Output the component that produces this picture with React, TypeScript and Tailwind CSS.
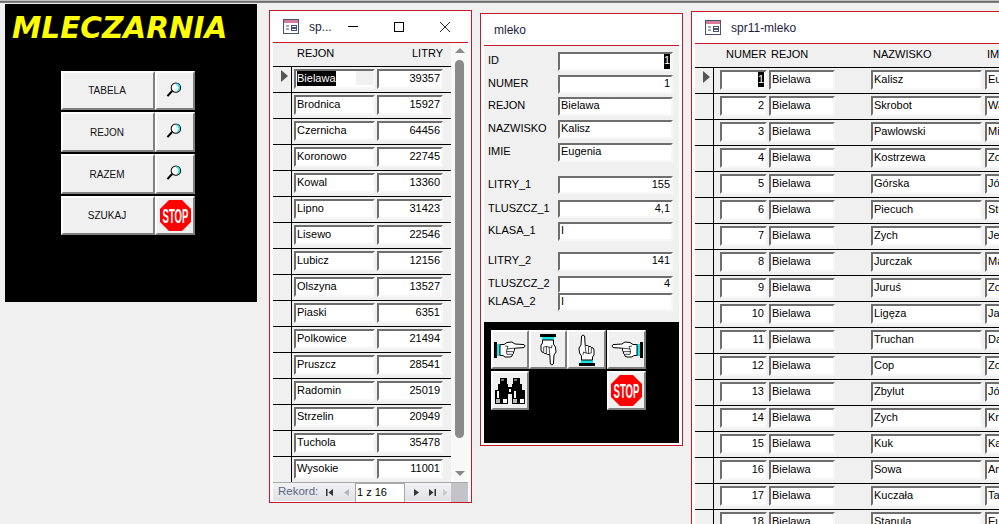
const FONT = "font-['Liberation_Sans',Arial,sans-serif]";

const REJONY: [string, number][] = [
  ["Bielawa", 39357],
  ["Brodnica", 15927],
  ["Czernicha", 64456],
  ["Koronowo", 22745],
  ["Kowal", 13360],
  ["Lipno", 31423],
  ["Lisewo", 22546],
  ["Lubicz", 12156],
  ["Olszyna", 13527],
  ["Piaski", 6351],
  ["Polkowice", 21494],
  ["Pruszcz", 28541],
  ["Radomin", 25019],
  ["Strzelin", 20949],
  ["Tuchola", 35478],
  ["Wysokie", 11001],
];

const OSOBY: [string, string][] = [
  ["Kalisz", "Eugenia"],
  ["Skrobot", "Wanda"],
  ["Pawlowski", "Mieczysław"],
  ["Kostrzewa", "Zofia"],
  ["Górska", "Józefa"],
  ["Piecuch", "Stefan"],
  ["Zych", "Jerzy"],
  ["Jurczak", "Maria"],
  ["Juruś", "Zofia"],
  ["Ligęza", "Janina"],
  ["Truchan", "Danuta"],
  ["Cop", "Zofia"],
  ["Zbylut", "Józef"],
  ["Zych", "Krystyna"],
  ["Kuk", "Karol"],
  ["Sowa", "Anna"],
  ["Kuczała", "Tadeusz"],
  ["Stanula", "Eugenia"],
];

const FORM_ROWS = [
  { label: "ID", value: "1", right: true, selected: true, cls: "h-[19px]" },
  { label: "NUMER", value: "1", right: true, cls: "mt-[4px] h-[19px]" },
  { label: "REJON", value: "Bielawa", cls: "mt-[3px] h-[19px]" },
  { label: "NAZWISKO", value: "Kalisz", cls: "mt-[4px] h-[19px]" },
  { label: "IMIE", value: "Eugenia", cls: "mt-[4px] h-[19px]" },
  { label: "LITRY_1", value: "155", right: true, cls: "mt-[14px] h-[18px]" },
  { label: "TLUSZCZ_1", value: "4,1", right: true, cls: "mt-[6px] h-[18px]" },
  { label: "KLASA_1", value: "I", cls: "mt-[4px] h-[19px]" },
  { label: "LITRY_2", value: "141", right: true, cls: "mt-[11px] h-[19px]" },
  { label: "TLUSZCZ_2", value: "4", right: true, cls: "mt-[5px] h-[17px]" },
  { label: "KLASA_2", value: "I", cls: "h-[18px]" },
];

const Field = ({
  value,
  right,
  selected,
  className,
}: {
  value: string | number;
  right?: boolean;
  selected?: boolean;
  className: string;
}) => (
  <div
    className={`flex shrink-0 items-center overflow-hidden whitespace-nowrap border-2 border-t-[#6e6e6e] border-l-[#6e6e6e] border-r-[#f7f7f7] border-b-[#f7f7f7] bg-white pb-[2px] text-[11px] text-black ${
      right ? "justify-end pr-[1px]" : "pl-[1px]"
    } ${className}`}
  >
    <span className={selected ? "bg-black text-white" : ""}>{value}</span>
    {selected && !right && <div className="ml-auto h-full w-[17px] bg-[#f0f0f0]" />}
  </div>
);

const FormIcon = () => (
  <svg width="16" height="15" viewBox="0 0 16 15" className="shrink-0">
    <rect x="0.5" y="0.5" width="15" height="14" fill="#fff" stroke="#44546f" />
    <rect x="1" y="1" width="14" height="3" fill="#d9799c" />
    <path d="M3 7h3M3 10h3" stroke="#44546f" />
    <rect x="8.5" y="6.5" width="5" height="2" fill="#fff" stroke="#44546f" />
    <rect x="8.5" y="9.5" width="5" height="2" fill="#fff" stroke="#44546f" />
  </svg>
);

const Magnifier = () => (
  <svg width="16" height="16" viewBox="0 0 17 17" className="mr-[3px] mb-[2px]">
    <circle cx="10.5" cy="6" r="5" fill="#fff" stroke="#000" strokeWidth="1.1" />
    <path d="M11 2.2A4 4 0 0 1 14.3 6A4 4 0 0 1 12 9.5" fill="none" stroke="#19e3e3" strokeWidth="1.6" />
    <path d="M6.5 9.5L1.5 15" stroke="#000" strokeWidth="2.2" />
  </svg>
);

const Stop = () => (
  <svg width="31" height="31" viewBox="0 0 31 31">
    <polygon points="9,0 22,0 31,9 31,22 22,31 9,31 0,22 0,9" fill="#ff0000" />
    <text
      transform="translate(15.5 22.5) scale(0.87 1.8)"
      textAnchor="middle"
      fill="#fff"
      fontSize="11"
      fontWeight="700"
      fontFamily="'Liberation Sans', Arial, sans-serif"
    >
      STOP
    </text>
  </svg>
);

// drawn pointing right, the other three are rotated
const Hand = ({ className = "" }: { className?: string }) => (
  <svg width="32" height="18" viewBox="0 0 32 18" className={`shrink-0 ${className}`}>
    <rect x="0" y="1" width="3" height="16" fill="#000" />
    <rect x="3" y="3" width="3" height="12" fill="#19e3e3" />
    <path
      d="M6 3.5L10 3.5L13 1.5L18 1L21 3L30 3.6Q32 5 30 6.6L20.5 7.2L20.5 9.5Q20.5 10.5 19.5 10.7Q20 13 18.6 13.3Q18.6 15.8 16 16L11 16L9 14.5L6 14.5Z"
      fill="#fff"
      stroke="#000"
      strokeWidth="1"
    />
    <path d="M11 5L14 5.5L13 8L20 7.2M13 8L12.5 10.5L19.5 10.7M12.5 10.5L13 13.3L18.6 13.3" fill="none" stroke="#000" strokeWidth="0.7" />
  </svg>
);

const Binoculars = () => (
  <svg width="30" height="26" viewBox="0 0 30 26" shapeRendering="crispEdges">
    <rect x="5" y="0" width="7" height="6" fill="#000" />
    <rect x="18" y="0" width="7" height="6" fill="#000" />
    <rect x="6" y="1" width="3" height="2" fill="#777" />
    <rect x="19" y="1" width="3" height="2" fill="#777" />
    <rect x="3" y="6" width="10" height="6" fill="#000" />
    <rect x="17" y="6" width="10" height="6" fill="#000" />
    <rect x="0" y="12" width="13" height="14" fill="#000" />
    <rect x="17" y="12" width="13" height="14" fill="#000" />
    <rect x="13" y="9" width="4" height="7" fill="#000" />
    <rect x="14" y="11" width="2" height="3" fill="#fff" />
    <rect x="2" y="13" width="2" height="7" fill="#fff" />
    <rect x="19" y="13" width="2" height="7" fill="#fff" />
    <rect x="1" y="21" width="4" height="4" fill="#bbb" />
    <rect x="18" y="21" width="4" height="4" fill="#bbb" />
    <rect x="8" y="21" width="4" height="4" fill="#fff" />
    <rect x="25" y="21" width="4" height="4" fill="#fff" />
  </svg>
);

const BEVEL =
  "flex shrink-0 items-center justify-center border-2 border-t-white border-l-white border-r-[#808080] border-b-[#808080] bg-[#f0f0f0]";

const MENU = [
  { label: "TABELA", cls: "h-[39px]", icon: <Magnifier /> },
  { label: "REJON", cls: "h-[40px]", icon: <Magnifier /> },
  { label: "RAZEM", cls: "h-[40px]", icon: <Magnifier /> },
  { label: "SZUKAJ", cls: "h-[39px]", icon: <Stop /> },
];

const MenuPanel = () => (
  <div className="mt-[1px] ml-[5px] h-[298px] w-[252px] shrink-0 bg-black">
    <div className="pt-[6px] pl-[7px] font-['DejaVu_Sans',Verdana,sans-serif] text-[29.5px] leading-[36px] font-bold text-[#ffff00] italic">
      MLECZARNIA
    </div>
    <div className="mt-[25px] ml-[56px] flex flex-col gap-[2px]">
      {MENU.map((item) => (
        <div key={item.label} className="flex">
          <div className={`${BEVEL} ${item.cls} w-[94px] pr-[2px] text-[10px] text-[#111]`}>{item.label}</div>
          <div className={`${BEVEL} ${item.cls} w-[40px]`}>{item.icon}</div>
        </div>
      ))}
    </div>
  </div>
);

const RowMarker = () => (
  <div className="mt-[3px] ml-[8px] h-0 w-0 border-y-[6px] border-l-[7px] border-y-transparent border-l-[#555]" />
);

const NavButton = ({ d, className }: { d: string; className: string }) => (
  <svg width="9" height="9" viewBox="0 0 9 9" className={className}>
    <path d={d} />
  </svg>
);

const RecordNav = () => (
  <div className="flex h-[19px] items-center border-t border-[#a8a8a8] bg-gradient-to-b from-[#f2f2f4] to-[#dfe1e6]">
    <div className="flex w-[178px] items-center overflow-hidden">
      <span className="ml-[5px] w-[47px] shrink-0 text-[11.5px] text-[#5a6684]">Rekord:</span>
      <NavButton d="M1 1h1.5v7H1zM8 1v7L3.5 4.5z" className="fill-[#333]" />
      <NavButton d="M7 1v7L2 4.5z" className="ml-[8px] fill-[#b5b5b5]" />
      <div className="ml-[4px] flex h-[19px] w-[50px] shrink-0 items-center border border-b-0 border-[#a8a8a8] bg-white pl-[1px] text-[11px] text-black">
        1 z 16
      </div>
      <NavButton d="M2 1v7L7 4.5z" className="ml-[7px] fill-[#333]" />
      <NavButton d="M1 1v7L5.5 4.5zM6.5 1H8v7H6.5z" className="ml-[7px] fill-[#333]" />
      <NavButton d="M1 1v7L5.5 4.5z" className="ml-[5px] fill-[#c9c9c9]" />
    </div>
    <div className="h-[19px] w-[17px] bg-[#c4c4c8]" />
  </div>
);

const Scrollbar = () => (
  <div className="flex h-[439px] w-[17px] flex-col items-center rounded-b-[6px] bg-[#f8f8f8]">
    <div className="mt-[5px] h-0 w-0 border-x-[5px] border-b-[5px] border-x-transparent border-b-[#8a8a8a]" />
    <div className="mt-[7px] h-[378px] w-[9px] rounded-[5px] bg-[#8a8a8a]" />
    <div className="mt-[33px] h-0 w-0 border-x-[5px] border-t-[5px] border-x-transparent border-t-[#8a8a8a]" />
  </div>
);

const RejonWindow = () => (
  <div className="mt-[7px] ml-[12px] h-[493px] w-[203px] shrink-0 border border-[#c4182f] bg-white px-[3px]">
    <div className="flex h-[32px] items-center border-b border-[#c4182f]">
      <div className="ml-[10px]">
        <FormIcon />
      </div>
      <span className="ml-[10px] w-[39px] shrink-0 text-[12px] text-[#1c1c3c]">sp...</span>
      <div className="h-px w-[10px] shrink-0 bg-black" />
      <div className="ml-[36px] h-[10px] w-[10px] shrink-0 border border-black" />
      <svg width="10" height="10" viewBox="0 0 10 10" className="ml-[36px] shrink-0">
        <path d="M0 0L10 10M10 0L0 10" stroke="#111" strokeWidth="0.9" />
      </svg>
    </div>
    <div className="flex">
      <div className="w-[178px] bg-[#f0f0f0]">
        <div className="flex h-[23px] items-center pb-[2px] text-[11px] text-black">
          <span className="ml-[24px] w-[115px] shrink-0">REJON</span>
          <span>LITRY</span>
        </div>
        {REJONY.map(([rejon, litry], i) => (
          <div key={rejon} className="flex h-[26px] border-t border-black">
            <div className="w-[19px] shrink-0 border-r border-black">{i === 0 && <RowMarker />}</div>
            <div className="mt-[2px] ml-[2px] flex gap-[2px]">
              <Field value={rejon} selected={i === 0} className="h-[20px] w-[81px]" />
              <Field value={litry} right className="h-[20px] w-[66px]" />
            </div>
          </div>
        ))}
      </div>
      <Scrollbar />
    </div>
    <RecordNav />
  </div>
);

const MlekoWindow = () => (
  <div className="mt-[10px] ml-[8px] h-[433px] w-[203px] shrink-0 border border-[#c4182f] bg-white px-[3px]">
    <div className="flex h-[32px] items-center border-b border-[#c4182f] pl-[10px] text-[12px] text-[#1c1c3c]">mleko</div>
    <div className="h-[276px] bg-[#f0f0f0] pt-[6px]">
      {FORM_ROWS.map((row) => (
        <div key={row.label} className={`flex items-center ${row.cls}`}>
          <span className="w-[74px] shrink-0 pb-[2px] pl-[4px] text-[11px] text-black">{row.label}</span>
          <Field value={row.value} right={row.right} selected={row.selected} className="h-full w-[115px]" />
        </div>
      ))}
    </div>
    <div className="h-[121px] bg-black pt-[8px] pl-[7px]">
      <div className="flex">
        <div className={`${BEVEL} h-[39px] w-[38px]`}>
          <Hand />
        </div>
        <div className={`${BEVEL} h-[39px] w-[38px]`}>
          <Hand className="rotate-90" />
        </div>
        <div className={`${BEVEL} h-[39px] w-[39px]`}>
          <Hand className="-rotate-90" />
        </div>
        <div className={`${BEVEL} ml-[1px] h-[39px] w-[39px]`}>
          <Hand className="-scale-x-100" />
        </div>
      </div>
      <div className="mt-[2px] flex justify-between pr-[33px]">
        <div className={`${BEVEL} h-[39px] w-[38px]`}>
          <Binoculars />
        </div>
        <div className={`${BEVEL} h-[39px] w-[39px]`}>
          <Stop />
        </div>
      </div>
    </div>
  </div>
);

const DaneWindow = () => (
  <div className="mt-[8px] ml-[8px] w-[308px] shrink-0 overflow-hidden border-t border-l border-[#c4182f] bg-white pl-[3px]">
    <div className="flex h-[32px] items-center border-b border-[#c4182f]">
      <div className="ml-[10px]">
        <FormIcon />
      </div>
      <span className="ml-[10px] text-[12px] text-[#1c1c3c]">spr11-mleko</span>
    </div>
    <div className="bg-[#f0f0f0]">
      <div className="flex h-[23px] items-center whitespace-nowrap pb-[2px] text-[11px] text-black">
        <span className="ml-[31px] w-[45px] shrink-0">NUMER</span>
        <span className="w-[102px] shrink-0">REJON</span>
        <span className="w-[114px] shrink-0">NAZWISKO</span>
        <span className="shrink-0">IMIE</span>
      </div>
      {OSOBY.map(([nazwisko, imie], i) => (
        <div key={i} className="flex h-[26px] border-t border-black">
          <div className="w-[19px] shrink-0 border-r border-black">{i === 0 && <RowMarker />}</div>
          <div className="mt-[2px] ml-[6px] flex">
            <Field value={i + 1} right selected={i === 0} className="h-[20px] w-[47px]" />
            <Field value="Bielawa" className="ml-[2px] h-[20px] w-[66px]" />
            <Field value={nazwisko} className="ml-[36px] h-[20px] w-[111px]" />
            <Field value={imie} className="ml-[3px] h-[20px] w-[100px]" />
          </div>
        </div>
      ))}
    </div>
  </div>
);

export default function App() {
  return (
    <div className={`h-[524px] w-[999px] overflow-hidden bg-[#f0f0f0] ${FONT}`}>
      <div className="h-[3px] bg-gradient-to-b from-[#f0f0f0] via-[#6e6e6e] to-[#8a8a8a]" />
      <div className="flex items-start">
        <MenuPanel />
        <RejonWindow />
        <MlekoWindow />
        <DaneWindow />
      </div>
    </div>
  );
}
